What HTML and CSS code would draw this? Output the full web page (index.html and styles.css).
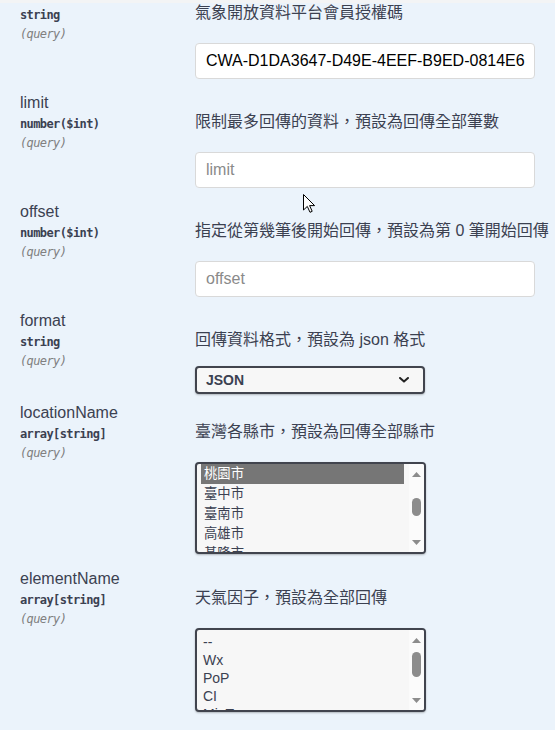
FILE: index.html
```html
<!DOCTYPE html>
<html lang="zh-Hant">
<head>
<meta charset="utf-8">
<title>Parameters</title>
<link rel="stylesheet" href="styles.css">
</head>
<body>
<div class="top-edge"></div>
<div class="params">
  <div class="param">
    <div class="param-name-col">
      <div class="param-name">Authorization</div>
      <div class="param-type">string</div>
      <div class="param-in">(query)</div>
    </div>
    <div class="param-desc-col">
      <div class="param-desc">氣象開放資料平台會員授權碼</div>
      <input class="text-input" type="text" value="CWA-D1DA3647-D49E-4EEF-B9ED-0814E6">
    </div>
  </div>

  <div class="param">
    <div class="param-name-col">
      <div class="param-name">limit</div>
      <div class="param-type">number($int)</div>
      <div class="param-in">(query)</div>
    </div>
    <div class="param-desc-col">
      <div class="param-desc">限制最多回傳的資料，預設為回傳全部筆數</div>
      <input class="text-input" type="text" placeholder="limit">
    </div>
  </div>

  <div class="param">
    <div class="param-name-col">
      <div class="param-name">offset</div>
      <div class="param-type">number($int)</div>
      <div class="param-in">(query)</div>
    </div>
    <div class="param-desc-col">
      <div class="param-desc">指定從第幾筆後開始回傳，預設為第 0 筆開始回傳</div>
      <input class="text-input" type="text" placeholder="offset">
    </div>
  </div>

  <div class="param">
    <div class="param-name-col">
      <div class="param-name">format</div>
      <div class="param-type">string</div>
      <div class="param-in">(query)</div>
    </div>
    <div class="param-desc-col">
      <div class="param-desc">回傳資料格式，預設為 json 格式</div>
      <div class="select" role="combobox">
        <span class="select-value">JSON</span>
        <svg class="chevron" width="10" height="6" viewBox="0 0 10 6"><path d="M1 1 L5 4.6 L9 1" fill="none" stroke="#222" stroke-width="2" stroke-linecap="round" stroke-linejoin="round"/></svg>
      </div>
    </div>
  </div>

  <div class="param">
    <div class="param-name-col">
      <div class="param-name">locationName</div>
      <div class="param-type">array[string]</div>
      <div class="param-in">(query)</div>
    </div>
    <div class="param-desc-col">
      <div class="param-desc">臺灣各縣市，預設為回傳全部縣市</div>
      <div class="listbox listbox-location" role="listbox">
        <div class="listbox-options">
          <div class="option selected">桃園市</div>
          <div class="option">臺中市</div>
          <div class="option">臺南市</div>
          <div class="option">高雄市</div>
          <div class="option">基隆市</div>
          <div class="option">新竹縣</div>
        </div>
        <div class="scrollbar">
          <div class="sb-btn"><svg width="9" height="5" viewBox="0 0 9 5"><polygon points="0,5 4.5,0 9,5" fill="#8c8c8c"/></svg></div>
          <div class="sb-track"><div class="sb-thumb thumb-location"></div></div>
          <div class="sb-btn"><svg width="9" height="5" viewBox="0 0 9 5"><polygon points="0,0 9,0 4.5,5" fill="#8c8c8c"/></svg></div>
        </div>
      </div>
    </div>
  </div>

  <div class="param">
    <div class="param-name-col">
      <div class="param-name">elementName</div>
      <div class="param-type">array[string]</div>
      <div class="param-in">(query)</div>
    </div>
    <div class="param-desc-col">
      <div class="param-desc">天氣因子，預設為全部回傳</div>
      <div class="listbox listbox-element" role="listbox">
        <div class="listbox-options">
          <div class="option">--</div>
          <div class="option">Wx</div>
          <div class="option">PoP</div>
          <div class="option">CI</div>
          <div class="option">MinT</div>
          <div class="option">MaxT</div>
        </div>
        <div class="scrollbar">
          <div class="sb-btn"><svg width="9" height="5" viewBox="0 0 9 5"><polygon points="0,5 4.5,0 9,5" fill="#8c8c8c"/></svg></div>
          <div class="sb-track"><div class="sb-thumb thumb-element"></div></div>
          <div class="sb-btn"><svg width="9" height="5" viewBox="0 0 9 5"><polygon points="0,0 9,0 4.5,5" fill="#8c8c8c"/></svg></div>
        </div>
      </div>
    </div>
  </div>
</div>
<svg class="cursor" width="13" height="19" viewBox="0 0 13 19"><polygon points="0.5,0.5 0.5,16 4.3,12.4 7,18.3 9.2,17.3 6.6,11.6 11.6,11.6" fill="#fff" stroke="#000" stroke-width="1" stroke-linejoin="round"/></svg>
</body>
</html>
```
FILE: styles.css
```css
html, body {
  margin: 0;
  padding: 0;
}
body {
  width: 555px;
  height: 730px;
  overflow: hidden;
  background: #ebf3fb;
  font-family: "Liberation Sans", Arial, "Noto Sans CJK TC", sans-serif;
  color: #3b4151;
  position: relative;
}
.top-edge {
  position: absolute;
  top: 0;
  left: 0;
  right: 0;
  height: 3px;
  background: #f3f4f5;
  z-index: 2;
}
.params {
  margin-top: -17px;
}
.param {
  display: grid;
  grid-template-columns: 175px 1fr;
  padding-left: 20px;
}
.param-name {
  padding-top: 1px;
  font-size: 16px;
  line-height: 20px;
  color: #3b4151;
}
.param-type {
  margin-top: 2px;
  font-family: "DejaVu Sans Mono", "Liberation Mono", monospace;
  font-size: 12px;
  line-height: 18px;
  font-weight: 700;
  letter-spacing: -0.6px;
  color: #3b4151;
}
.param-in {
  margin-top: 1px;
  font-family: "DejaVu Sans Mono", "Liberation Mono", monospace;
  font-size: 12px;
  line-height: 18px;
  font-style: italic;
  letter-spacing: -0.6px;
  color: #808080;
}
.param-desc {
  margin-top: 20px;
  font-size: 16px;
  line-height: 20px;
  color: #3b4151;
  white-space: nowrap;
}
.text-input {
  display: block;
  box-sizing: border-box;
  width: 340px;
  height: 36px;
  margin: 20px 0 13px;
  padding: 8px 9px 8px 10px;
  border: 1px solid #d9d9d9;
  border-radius: 4px;
  background: #fff;
  font-family: "Liberation Sans", Arial, sans-serif;
  font-size: 16px;
  line-height: 18px;
  color: #000;
  outline: none;
}
.text-input::placeholder {
  color: #8a8a8a;
}
.select {
  box-sizing: border-box;
  width: 230px;
  height: 28px;
  margin: 16px 0 8px;
  padding: 0 14px 0 9px;
  display: flex;
  align-items: center;
  justify-content: space-between;
  border: 2px solid #41444e;
  border-radius: 4px;
  background: #f7f7f7;
  box-shadow: 0 1px 2px 0 rgba(0, 0, 0, 0.25);
  font-size: 14px;
  font-weight: 700;
  color: #3b4151;
}
.chevron {
  display: block;
}
.listbox {
  box-sizing: border-box;
  width: 231px;
  margin: 20px 0 14px;
  display: flex;
  border: 2px solid #41444e;
  border-radius: 4px;
  background: #f7f7f7;
  box-shadow: 0 1px 2px 0 rgba(0, 0, 0, 0.25);
  overflow: hidden;
}
.listbox-location {
  height: 92px;
}
.listbox-element {
  height: 84px;
}
.listbox-options {
  flex: 1;
  padding: 0 5px 0 4px;
  overflow: hidden;
}
.listbox-element .listbox-options {
  padding-top: 3px;
}
.option {
  padding-left: 3px;
  font-family: "Liberation Sans", Arial, "Noto Sans CJK TC", sans-serif;
  font-size: 13.33px;
  line-height: 20px;
  height: 20px;
  color: #3b4151;
  white-space: nowrap;
}
.listbox-element .option {
  font-size: 14px;
  line-height: 18px;
  height: 18px;
  padding-left: 2px;
}
.option.selected {
  background: #767676;
  color: #fff;
}
.scrollbar {
  width: 15px;
  display: flex;
  flex-direction: column;
  background: #fbfbfb;
}
.sb-btn {
  height: 20px;
  display: flex;
  align-items: center;
  justify-content: center;
}
.sb-btn svg {
  display: block;
}
.sb-track {
  flex: 1;
  display: flex;
  flex-direction: column;
  align-items: center;
}
.sb-thumb {
  width: 9px;
  border-radius: 5px;
  background: #8c8c8c;
}
.thumb-location {
  margin-top: 14px;
  height: 18px;
}
.thumb-element {
  margin-top: 2px;
  height: 25px;
}
.cursor {
  position: absolute;
  left: 303px;
  top: 194px;
  z-index: 3;
}
```
